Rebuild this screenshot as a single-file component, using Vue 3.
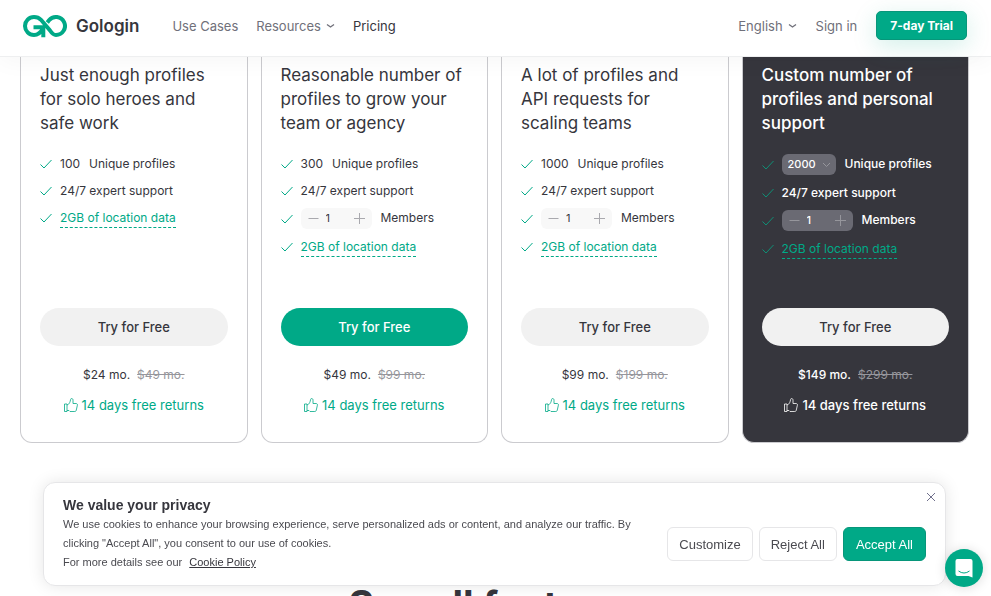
<script setup>
import { reactive } from 'vue'

const plans = reactive([
  { id: 'solo', title: 'Just enough profiles for solo heroes and safe work', profiles: 100, members: null, price: '$24', old: '$49' },
  { id: 'team', title: 'Reasonable number of profiles to grow your team or agency', profiles: 300, members: 1, price: '$49', old: '$99', featured: true },
  { id: 'scale', title: 'A lot of profiles and API requests for scaling teams', profiles: 1000, members: 1, price: '$99', old: '$199' },
  { id: 'custom', title: 'Custom number of profiles and personal support', profiles: 2000, members: 1, price: '$149', old: '$299', dark: true },
])

const step = (plan, by) => {
  plan.members = Math.max(1, plan.members + by)
}
</script>

<template>
  <div class="page">
    <header class="header">
      <a class="brand" href="#">
        <svg class="brand-mark" viewBox="0 0 44 24" aria-hidden="true">
          <path d="M20.300 23.300V13.300H10.500M20 14.500C17.500 19 15 21 11 21A9 9 0 1 1 11 3C14 3 16 3.800 18 5.800L27 16.500C29 19.500 30.500 21 33 21A9 9 0 1 0 26 6.300L24.300 8.500" />
        </svg>
        <span>Gologin</span>
      </a>
      <nav class="nav">
        <a href="#">Use Cases</a>
        <a href="#">Resources
          <svg class="caret" viewBox="0 0 9 6" aria-hidden="true"><path d="M1 1.500 4.500 4 8 1.500" /></svg>
        </a>
        <a class="current" href="#">Pricing</a>
      </nav>
      <div class="account">
        <a href="#">English
          <svg class="caret" viewBox="0 0 9 6" aria-hidden="true"><path d="M1 1.500 4.500 4 8 1.500" /></svg>
        </a>
        <a href="#">Sign in</a>
        <button class="trial" type="button">7-day Trial</button>
      </div>
    </header>

    <main>
      <section class="plans">
        <article v-for="plan in plans" :key="plan.id" class="card" :class="{ dark: plan.dark }">
          <h3>{{ plan.title }}</h3>
          <ul>
            <li>
              <svg class="check" viewBox="0 0 12 10" aria-hidden="true"><path d="M.5 5.500 4 9 11.500 1" /></svg>
              <label v-if="plan.dark" class="amount">
                <span class="select-wrap">
                  <select v-model="plan.profiles">
                    <option :value="2000">2000</option>
                    <option :value="5000">5000</option>
                  </select>
                  <svg class="select-caret" viewBox="0 0 9 6" aria-hidden="true"><path d="M1 1 4.500 4.500 8 1" /></svg>
                </span>
                <span>Unique profiles</span>
              </label>
              <span v-else class="amount"><span>{{ plan.profiles }}</span><span>Unique profiles</span></span>
            </li>
            <li>
              <svg class="check" viewBox="0 0 12 10" aria-hidden="true"><path d="M.5 5.500 4 9 11.500 1" /></svg>
              <span>24/7 expert support</span>
            </li>
            <li v-if="plan.members">
              <svg class="check" viewBox="0 0 12 10" aria-hidden="true"><path d="M.5 5.500 4 9 11.500 1" /></svg>
              <span class="amount">
                <span class="stepper">
                  <button type="button" aria-label="Fewer members" @click="step(plan, -1)">
                    <svg viewBox="0 0 11 11"><path d="M.5 5.500H10.500" /></svg>
                  </button>
                  <input :id="plan.id + '-members'" v-model.number="plan.members" type="text" />
                  <button type="button" aria-label="More members" @click="step(plan, 1)">
                    <svg viewBox="0 0 11 11"><path d="M0 5.500H11M5.500 0V11" /></svg>
                  </button>
                </span>
                <label :for="plan.id + '-members'">Members</label>
              </span>
            </li>
            <li>
              <svg class="check" viewBox="0 0 12 10" aria-hidden="true"><path d="M.5 5.500 4 9 11.500 1" /></svg>
              <a class="data" href="#">2GB of location data</a>
            </li>
          </ul>
          <button class="try" :class="{ primary: plan.featured }" type="button">Try for Free</button>
          <p class="price"><span>{{ plan.price }} mo.</span><s>{{ plan.old }} mo.</s></p>
          <p class="returns">
            <svg viewBox="0 0 14 14" aria-hidden="true"><path d="M.5 6H3V13.500H.5ZM3 12.500H5L6 13.500H10.800C11.500 13.500 12 13.100 12.200 12.500L13.400 7.200C13.600 6.200 13 5.500 12.100 5.500H9V2.200C9 1.200 8.500 .5 7.700 .5C7 .5 6.700 .9 6.600 1.500C6.200 4 5.400 5.400 4.500 6.200L3 7" /></svg>
            <span>14 days free returns</span>
          </p>
        </article>
      </section>
      <h2>See all features</h2>
    </main>

    <section class="cookies" aria-label="Cookie consent">
      <div class="cookies-text">
        <h4>We value your privacy</h4>
        <p>We use cookies to enhance your browsing experience, serve personalized ads or content, and analyze our traffic. By clicking "Accept All", you consent to our use of cookies.</p>
        <p class="more">For more details see our <a href="#">Cookie Policy</a></p>
      </div>
      <div class="cookies-actions">
        <button type="button">Customize</button>
        <button type="button">Reject All</button>
        <button class="accept" type="button">Accept All</button>
      </div>
      <button class="close" type="button" aria-label="Close">
        <svg viewBox="0 0 10 10"><path d="M1 1 9 9M9 1 1 9" /></svg>
      </button>
    </section>

    <button class="chat" type="button" aria-label="Open chat">
      <svg viewBox="0 0 18 20">
        <path class="bubble" d="M2.500 1H15.500Q17.500 1 17.500 3V19.500L13.500 18H2.500Q.5 18 .5 16V3Q.5 1 2.500 1Z" />
        <path class="smile" d="M3.500 13Q9 17 14.500 13" />
      </svg>
    </button>
  </div>
</template>

<style>
body {
  margin: 0;
  background: #fff;
}
</style>

<style scoped>
* {
  box-sizing: border-box;
}

.page {
  height: 100vh;
  overflow: hidden;
  background: #fff;
  color: #36363d;
  font-family: Inter, "Liberation Sans", sans-serif;
}

h2, h3, h4, p, ul {
  margin: 0;
  padding: 0;
}

a {
  color: inherit;
  text-decoration: none;
}

button, input, select {
  margin: 0;
  padding: 0;
  border: 0;
  font: inherit;
  color: inherit;
  background: none;
}

button {
  cursor: pointer;
}

svg {
  display: block;
  flex: none;
  fill: none;
  stroke: currentColor;
}

.header {
  position: relative;
  z-index: 1;
  display: flex;
  align-items: center;
  height: 57px;
  padding: 0 24px 5px 23px;
  border-bottom: 1px solid #eeeff0;
  background: #fff;
  box-shadow: 0 4px 24px rgba(0, 0, 0, 0.04);
  font-size: 13px;
  color: #70707a;
}

.brand {
  display: flex;
  align-items: center;
  gap: 9px;
  font-size: 17px;
  font-weight: 600;
  color: #36363d;
}

.brand-mark {
  width: 44px;
  height: 24px;
  color: #00a987;
  stroke-width: 4;
}

.nav, .account {
  display: flex;
  align-items: center;
}

.nav {
  gap: 18px;
  margin-left: 33px;
}

.nav a, .account a {
  display: flex;
  align-items: center;
  gap: 5px;
}

.nav .current {
  color: #36363d;
}

.caret {
  width: 9px;
  height: 6px;
  stroke-width: 1.4;
}

.account {
  gap: 19px;
  margin-left: auto;
}

.trial {
  height: 29px;
  padding: 0 13px;
  border: 1px solid #07967a;
  border-radius: 5px;
  background: #00a987;
  box-shadow: 0 6px 24px rgba(0, 169, 135, 0.18);
  font-size: 12px;
  font-weight: 700;
  color: #fff;
}

.plans {
  display: grid;
  grid-template-columns: repeat(4, minmax(0, 1fr));
  gap: 13px;
  padding: 0 22px 0 20px;
}

.card {
  display: flex;
  flex-direction: column;
  padding: 6px 19px 27px;
  border: 1px solid #cbcbcf;
  border-top: 0;
  border-radius: 0 0 12px 12px;
}

.card h3 {
  font-size: 17px;
  line-height: 24px;
  font-weight: 400;
}

.card ul {
  flex: 1;
  min-height: 158px;
  margin-top: 15px;
  list-style: none;
  font-size: 12px;
  line-height: 19px;
}

.card li {
  display: flex;
  align-items: flex-start;
  gap: 8px;
  padding: 4px 0;
}

.check {
  align-self: center;
  width: 12px;
  height: 10px;
  color: #00a987;
  stroke-width: 1;
}

.amount {
  display: flex;
  gap: 9px;
}

.stepper {
  display: flex;
  align-items: center;
  width: 71px;
  height: 21px;
  padding: 0 7px;
  border-radius: 6px;
  background: #f8f8f8;
  font-size: 11px;
}

.stepper button {
  color: #a9a9ae;
}

.stepper svg {
  width: 11px;
  height: 11px;
}

.stepper input {
  flex: 1;
  min-width: 0;
  padding-left: 7px;
}

.select-wrap {
  position: relative;
  height: 21px;
}

.select-wrap select {
  width: 54px;
  height: 21px;
  padding-left: 6px;
  border-radius: 6px;
  background: #6a6a73;
  appearance: none;
  font-size: 11px;
}

.select-caret {
  position: absolute;
  top: 8px;
  right: 5px;
  width: 9px;
  height: 6px;
  color: #96969c;
}

.data {
  border-bottom: 1px dashed #00a987;
  color: #00a987;
}

.try {
  height: 38px;
  border-radius: 19px;
  background: #f1f1f1;
  font-size: 13px;
  font-weight: 500;
}

.try.primary {
  background: #00a987;
  color: #fff;
}

.price, .returns {
  display: flex;
  justify-content: center;
  align-items: center;
  font-size: 13px;
  line-height: 20px;
}

.price {
  gap: 7px;
  margin-top: 19px;
  font-size: 12px;
}

.price s {
  color: #96969c;
}

.returns {
  gap: 4px;
  margin-top: 10px;
  color: #00a987;
}

.returns svg {
  width: 14px;
  height: 14px;
  stroke-width: 0.8;
}

.dark {
  background: #36363d;
  color: #fff;
}

.dark h3, .dark ul, .dark .price span, .dark .returns {
  font-weight: 500;
}

.dark .price s, .dark .data {
  font-weight: 400;
}

.dark .stepper {
  background: #6a6a73;
}

.dark .stepper button {
  color: #96969c;
}

.dark .check {
  color: #0f8f76;
}

.dark .try {
  color: #36363d;
}

.dark .returns {
  color: #fff;
}

h2 {
  margin-top: 138px;
  font-size: 39px;
  line-height: 48px;
  font-weight: 700;
  text-align: center;
}

.cookies {
  position: fixed;
  right: 45px;
  bottom: 10px;
  left: 43px;
  z-index: 2;
  display: flex;
  justify-content: space-between;
  gap: 16px;
  padding: 13px 19px;
  border: 1px solid #e6e6e8;
  border-radius: 12px;
  background: #fff;
  box-shadow: 0 0 16px rgba(0, 0, 0, 0.1);
  font-family: "Liberation Sans", Arial, sans-serif;
}

.cookies-text {
  flex: 1;
  max-width: 580px;
  font-size: 11px;
  line-height: 19px;
  color: #4a4a50;
}

.cookies-text h4 {
  font-size: 14px;
  line-height: 19px;
  color: #36363d;
}

.more a {
  margin-left: 4px;
  color: #36363d;
  text-decoration: underline;
}

.cookies-actions {
  display: flex;
  align-items: center;
  gap: 6px;
  padding-top: 20px;
  font-size: 13px;
  color: #4a4a50;
}

.cookies-actions button {
  height: 34px;
  padding: 0 11px;
  border: 1px solid #e6e6e8;
  border-radius: 6px;
  white-space: nowrap;
}

.cookies-actions .accept {
  padding: 0 12px;
  border-color: #07967a;
  background: #00a987;
  color: #fff;
}

.close {
  position: absolute;
  top: 9px;
  right: 9px;
  color: #70708c;
}

.close svg {
  width: 10px;
  height: 10px;
}

.chat {
  position: fixed;
  right: 8px;
  bottom: 9px;
  z-index: 3;
  display: grid;
  place-items: center;
  width: 38px;
  height: 38px;
  border-radius: 50%;
  background: #00a987;
  box-shadow: 0 1px 12px rgba(0, 0, 0, 0.14);
}

.chat svg {
  width: 18px;
  height: 20px;
}

.bubble {
  fill: #fff;
  stroke: none;
}

.smile {
  stroke: #00a987;
  stroke-width: 1;
}
</style>
